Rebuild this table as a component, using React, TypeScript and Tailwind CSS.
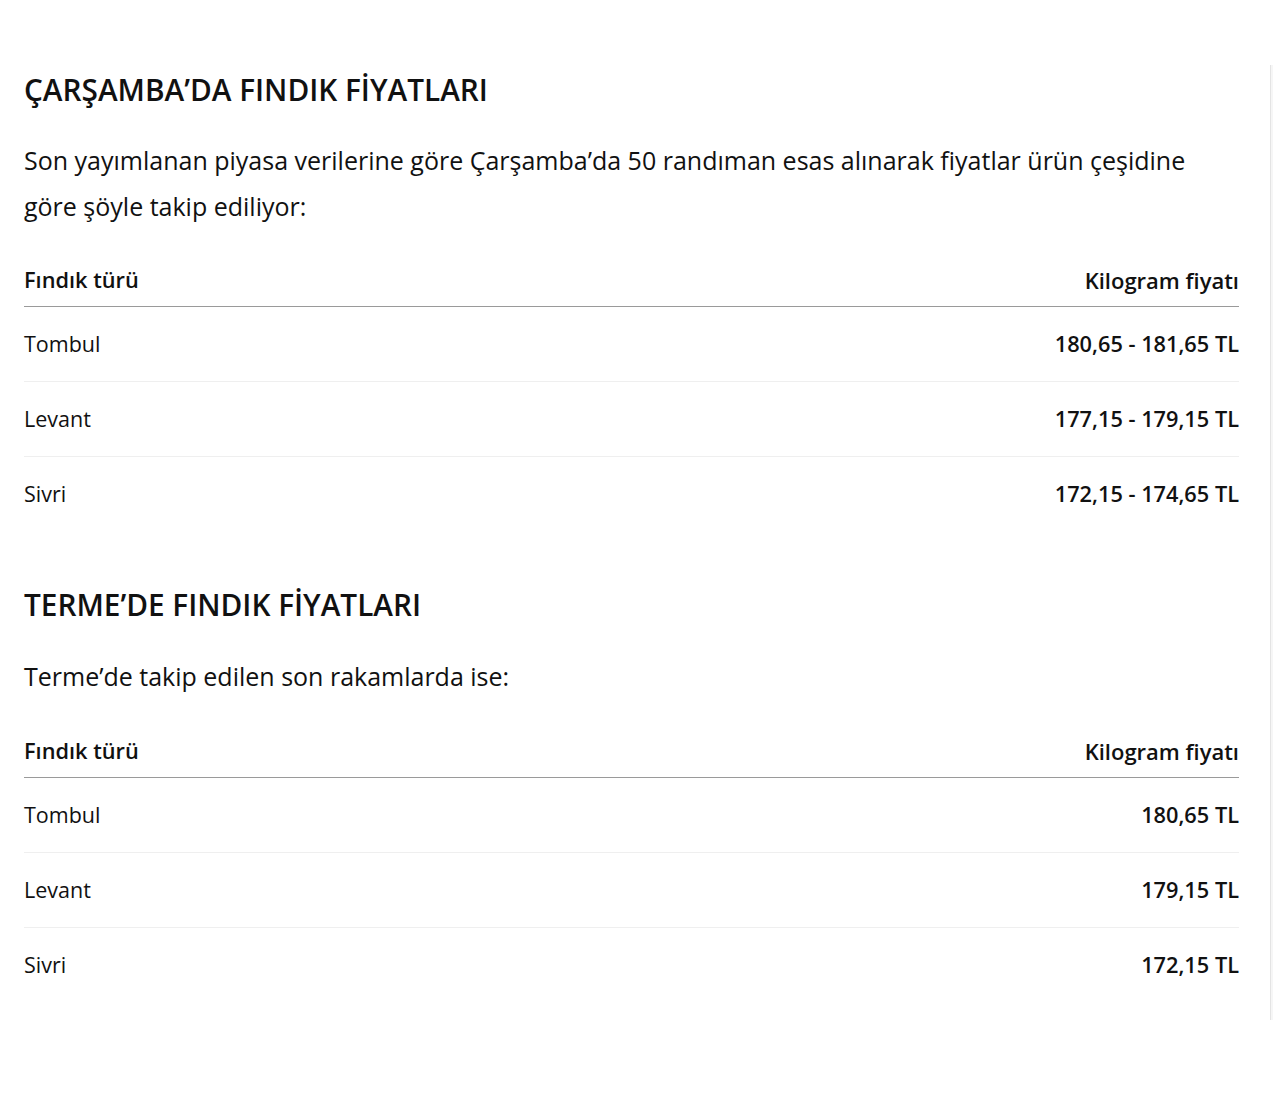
import React from 'react';

type Row = { name: string; price: string };

const carsamba: Row[] = [
  { name: 'Tombul', price: '180,65 - 181,65 TL' },
  { name: 'Levant', price: '177,15 - 179,15 TL' },
  { name: 'Sivri', price: '172,15 - 174,65 TL' },
];

const terme: Row[] = [
  { name: 'Tombul', price: '180,65 TL' },
  { name: 'Levant', price: '179,15 TL' },
  { name: 'Sivri', price: '172,15 TL' },
];

const PriceTable: React.FC<{ rows: Row[] }> = ({ rows }) => (
  <table className="w-full border-collapse text-[#111]">
    <thead>
      <tr className="border-b border-[#9a9a9a]">
        <th className="pt-[9px] pb-[11px] text-left text-[21.75px] font-semibold leading-[30px]">Fındık türü</th>
        <th className="pt-[9px] pb-[11px] text-right text-[22px] font-semibold leading-[30px]">Kilogram fiyatı</th>
      </tr>
    </thead>
    <tbody>
      {rows.map((r, i) => (
        <tr key={r.name} className={i < rows.length - 1 ? 'border-b border-[#efefef]' : ''}>
          <td className="h-[75px] p-0 text-left align-middle text-[21.5px] leading-[30px]">{r.name}</td>
          <td className="h-[75px] p-0 text-right align-middle text-[21.75px] font-semibold leading-[30px]">{r.price}</td>
        </tr>
      ))}
    </tbody>
  </table>
);

export default function App() {
  return (
    <div className="flex min-h-[1111px] w-full bg-white font-['Open_Sans',sans-serif] text-[#111]">
      <main className="w-[1239px] pl-[24px] pt-[72px]">
        <h2 className="text-[29.75px] font-semibold leading-[36px]">ÇARŞAMBA’DA FINDIK FİYATLARI</h2>
        <p className="mt-[29px] text-[25px] leading-[46px]">
          Son yayımlanan piyasa verilerine göre Çarşamba’da 50 randıman esas alınarak fiyatlar ürün çeşidine
          göre şöyle takip ediliyor:
        </p>
        <div className="mt-[27px]">
          <PriceTable rows={carsamba} />
        </div>

        <h2 className="mt-[55px] text-[29.75px] font-semibold leading-[36px]">TERME’DE FINDIK FİYATLARI</h2>
        <p className="mt-[30px] text-[25px] leading-[46px]">Terme’de takip edilen son rakamlarda ise:</p>
        <div className="mt-[28px]">
          <PriceTable rows={terme} />
        </div>
      </main>
      <div className="ml-auto mr-[7px] mt-[65px] h-[955px] w-[3px] border-l border-[#e4e4e4] bg-[#f6f6f6]" />
    </div>
  );
}
